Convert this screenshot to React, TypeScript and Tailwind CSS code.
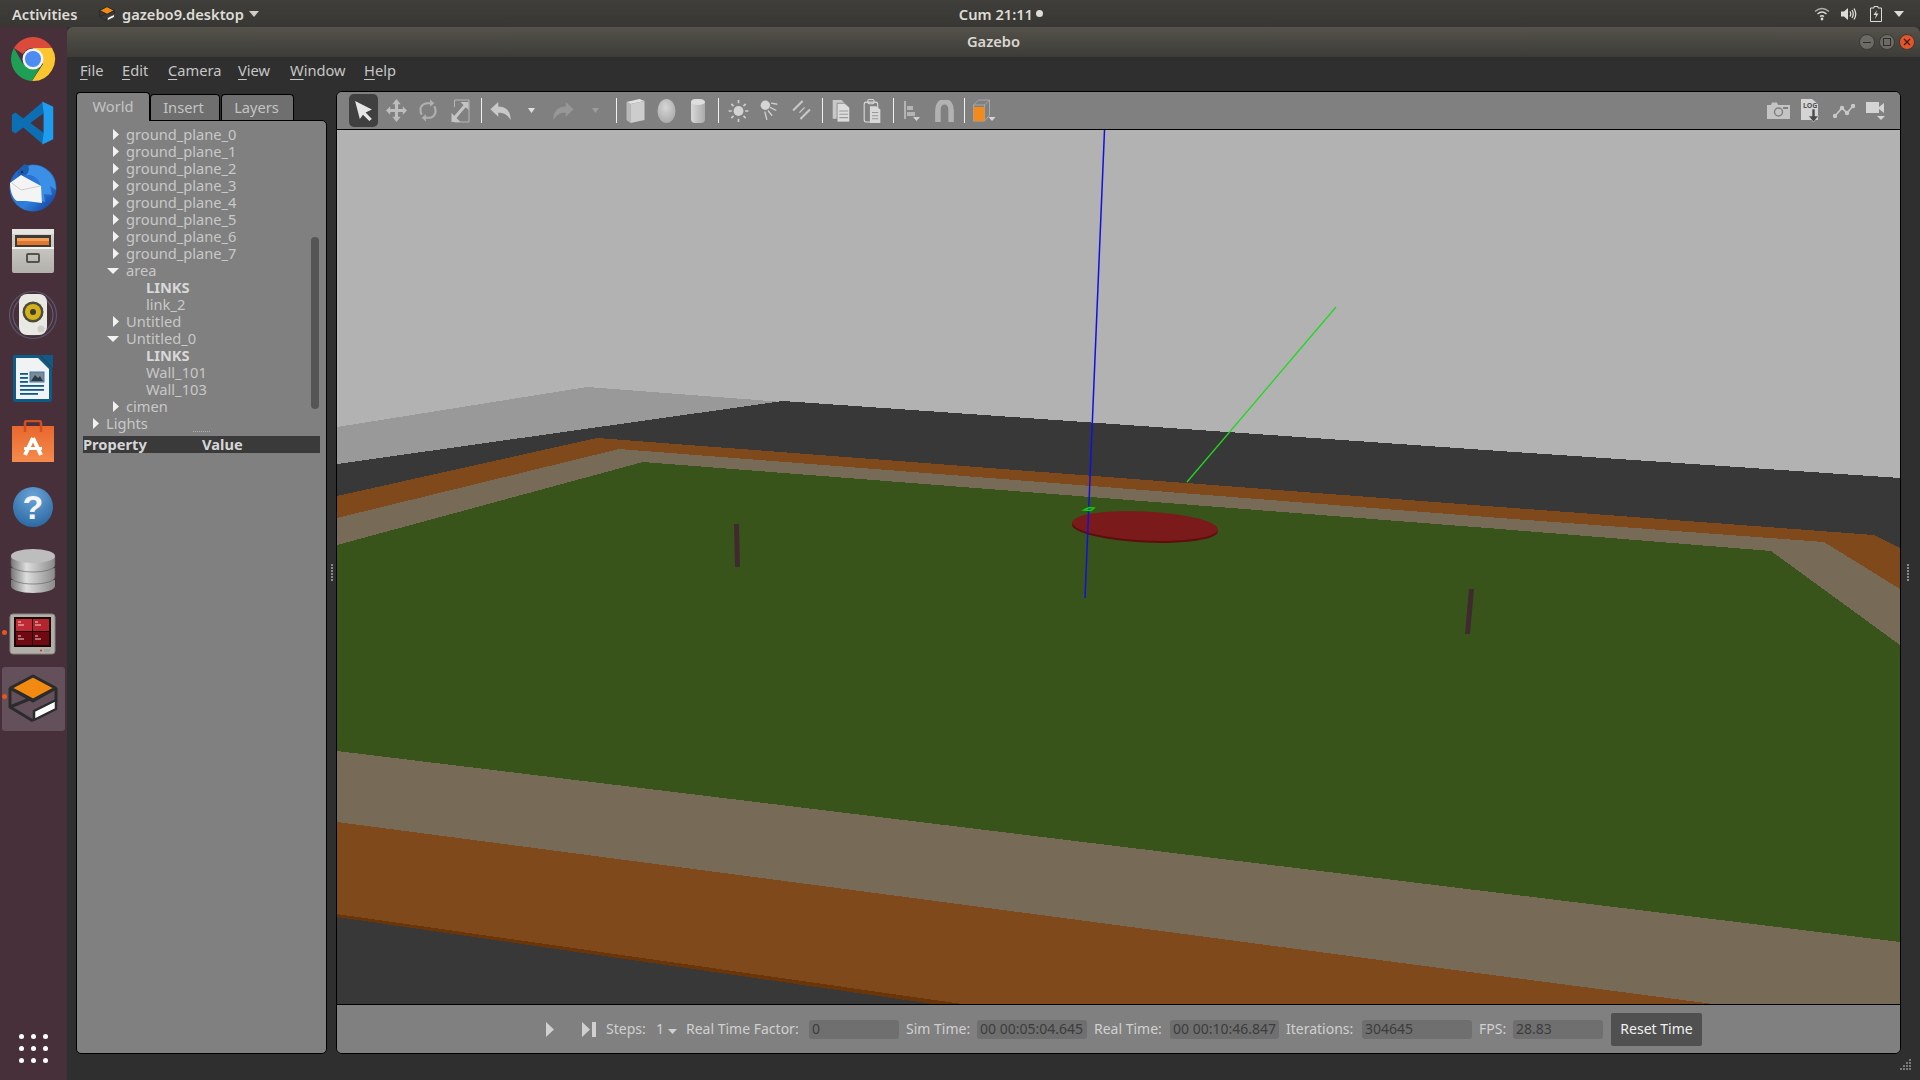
import React from "react";

const FONT = { fontFamily: '"Noto Sans", sans-serif' };

// launcher icons
const ChromeIcon = () => (
  <svg width="48" height="48" viewBox="0 0 48 48">
    <path d="M5 13 A22 22 0 0 1 43 13 L24 13 A11 11 0 0 0 14 19 Z" fill="#dc4a3c" />
    <path d="M43 13 A22 22 0 0 1 23 46 L34 29 L24 13 Z" fill="#fbc62f" />
    <path d="M5 13 A22 22 0 0 0 23 46 L33 29 L14 29 Z" fill="#1f9e55" />
    <circle cx="24" cy="24" r="10.5" fill="#f1f1f1" />
    <circle cx="24" cy="24" r="8" fill="#4c8bf0" />
  </svg>
);

const VsCodeIcon = () => (
  <svg width="44" height="44" viewBox="0 0 100 100">
    <path d="M72 2 L28 40 L10 26 L2 31 V69 L10 74 L28 60 L72 98 L74 72 L44 50 L74 28 Z" fill="#0d6fb3" />
    <path d="M71 1 L96 13 V87 L71 99 L74 72 V28 Z" fill="#1d9cf0" />
  </svg>
);

const ThunderbirdIcon = () => (
  <svg width="50" height="50" viewBox="0 0 50 50">
    <defs>
      <linearGradient id="tb" x1="0" y1="0" x2="1" y2="1">
        <stop offset="0" stopColor="#1a5fc4" />
        <stop offset="0.6" stopColor="#2f7fdc" />
        <stop offset="1" stopColor="#10318f" />
      </linearGradient>
    </defs>
    <circle cx="25" cy="26" r="23.5" fill="url(#tb)" />
    <path d="M25 3 C37 3 48 14 48 28 L42 24 L44 33 L36 32 L37 40 L30 38 L22 48 C28 40 38 30 30 18 C26 12 18 12 12 15 C15 8 20 3 25 3 Z" fill="#3b8fe6" />
    <path d="M17 2 C12 5 9 10 10 15 L18 13 C22 9 22 4 17 2 Z" fill="#1c5db0" />
    <path d="M2 21 L13 13 L33 24 L34 41 L18 39 L9 39 C4 36 2 28 2 21 Z" fill="#f4f4f4" />
    <path d="M4 21 L13 28 L32 24" fill="none" stroke="#c4c4c4" strokeWidth="0.8" />
    <circle cx="14" cy="10" r="1.2" fill="#0c2a55" />
  </svg>
);

const FilesIcon = () => (
  <svg width="48" height="48" viewBox="0 0 48 48">
    <defs>
      <linearGradient id="fl" x1="0" y1="0" x2="0" y2="1">
        <stop offset="0" stopColor="#d8d6d1" />
        <stop offset="1" stopColor="#b2b0aa" />
      </linearGradient>
    </defs>
    <rect x="3" y="2" width="42" height="44" rx="2" fill="url(#fl)" />
    <rect x="3" y="2" width="42" height="5" fill="#e6e5e1" />
    <rect x="6" y="8" width="36" height="12" fill="#3f3a34" />
    <rect x="8" y="11" width="32" height="6" fill="#f2a15c" />
    <rect x="8" y="14" width="32" height="4" fill="#e2762c" />
    <rect x="3" y="20" width="42" height="2" fill="#f2f2f0" />
    <rect x="18" y="27" width="12" height="8" rx="1" fill="none" stroke="#55524c" strokeWidth="2" />
  </svg>
);

const RhythmboxIcon = () => (
  <svg width="50" height="50" viewBox="0 0 50 50">
    <circle cx="25" cy="25" r="23.5" fill="none" stroke="#5b5670" strokeWidth="1.2" />
    <circle cx="25" cy="25" r="20" fill="none" stroke="#625c76" strokeWidth="1.2" />
    <rect x="11" y="4" width="28" height="41" rx="8" fill="#e9e9e4" />
    <circle cx="25" cy="22" r="10.5" fill="#4d4a3c" />
    <circle cx="25" cy="22" r="8" fill="#d2b11a" />
    <circle cx="25" cy="22" r="3" fill="#3c3a30" />
    <circle cx="33" cy="39" r="3.5" fill="#cfcfc9" />
  </svg>
);

const WriterIcon = () => (
  <svg width="44" height="50" viewBox="0 0 44 50">
    <path d="M3 1 H28 L41 14 V45 Q41 48 38 48 H5 Q2 48 2 45 V3 Q2 1 3 1 Z" fill="#0f5b87" />
    <path d="M5 4 H27 L38 15 V45 H5 Z" fill="#f0f2f4" />
    <path d="M29 1 H42 V14 Z" fill="#0f5b87" />
    <rect x="9" y="19" width="8" height="1.8" fill="#0f5b87" />
    <rect x="9" y="23" width="8" height="1.8" fill="#0f5b87" />
    <rect x="9" y="27" width="8" height="1.8" fill="#0f5b87" />
    <rect x="9" y="31" width="24" height="1.8" fill="#0f5b87" />
    <rect x="9" y="35" width="24" height="1.8" fill="#0f5b87" />
    <rect x="9" y="39" width="18" height="1.8" fill="#0f5b87" />
    <rect x="19" y="18" width="14" height="10" fill="#7a8a99" stroke="#3d7aa0" />
    <path d="M20 27 L24 21 L27 24 L29 22 L32 27 Z" fill="#2d3a44" />
  </svg>
);

const SoftwareIcon = () => (
  <svg width="46" height="46" viewBox="0 0 46 46">
    <defs>
      <linearGradient id="sw" x1="0" y1="0" x2="0" y2="1">
        <stop offset="0" stopColor="#e8682e" />
        <stop offset="1" stopColor="#f58a4c" />
      </linearGradient>
    </defs>
    <rect x="2" y="6" width="42" height="36" fill="url(#sw)" />
    <path d="M15 12 V3 Q15 1 17 1 H29 Q31 1 31 3 V12" fill="none" stroke="#cf4f22" strokeWidth="2.5" />
    <path d="M23 18 L15 35 M23 18 L31 35" stroke="#fff" strokeWidth="4" fill="none" />
    <rect x="14" y="27" width="18" height="3" fill="#fff" />
  </svg>
);

const HelpIcon = () => (
  <svg width="44" height="44" viewBox="0 0 44 44">
    <defs>
      <radialGradient id="hp" cx="0.5" cy="0.25" r="0.85">
        <stop offset="0" stopColor="#6ba4d8" />
        <stop offset="1" stopColor="#23629c" />
      </radialGradient>
    </defs>
    <circle cx="22" cy="22" r="20" fill="url(#hp)" />
    <text x="22" y="34" textAnchor="middle" fontSize="34" fontWeight="700" fill="#f5f5f5" fontFamily="Liberation Sans, sans-serif">?</text>
  </svg>
);

const DbIcon = () => (
  <svg width="48" height="48" viewBox="0 0 48 48">
    <defs>
      <linearGradient id="db" x1="0" y1="0" x2="1" y2="0">
        <stop offset="0" stopColor="#777777" />
        <stop offset="0.35" stopColor="#dddddd" />
        <stop offset="1" stopColor="#8a8a8a" />
      </linearGradient>
    </defs>
    <path d="M2 33 V39 C2 43 12 46 24 46 C36 46 46 43 46 39 V33 Z" fill="url(#db)" />
    <path d="M2 21 V30 C2 34 12 37 24 37 C36 37 46 34 46 30 V21 Z" fill="url(#db)" stroke="#5a5a5a" strokeWidth="0.6" />
    <path d="M2 9 V18 C2 22 12 25 24 25 C36 25 46 22 46 18 V9 Z" fill="url(#db)" stroke="#5a5a5a" strokeWidth="0.6" />
    <ellipse cx="24" cy="9" rx="22" ry="7" fill="#bdbdbd" />
  </svg>
);

const TermGridIcon = () => (
  <svg width="48" height="44" viewBox="0 0 48 44">
    <rect x="1" y="1" width="45" height="40" rx="3" fill="#b0afa8" stroke="#85847f" />
    <rect x="5" y="4" width="37" height="30" fill="#1f0608" />
    <rect x="7" y="6" width="16" height="12" fill="#c02a34" />
    <rect x="24" y="6" width="16" height="12" fill="#b3242e" />
    <rect x="7" y="19" width="16" height="13" fill="#6f0a12" />
    <rect x="24" y="19" width="16" height="13" fill="#6f0a12" />
    <path d="M9 9 h3 M9 12 h6 M26 9 h3 M26 12 h6 M9 23 h3 M9 26 h6 M26 23 h3 M26 26 h6" stroke="#f3d0d0" strokeWidth="1" />
    <circle cx="32" cy="37.5" r="1" fill="#d8262c" />
    <rect x="35" y="36" width="6" height="3" fill="#a3a29c" />
  </svg>
);

const GazeboIcon = ({ size = 50 }: { size?: number }) => (
  <svg width={size} height={size} viewBox="0 0 50 50">
    <path d="M2 14 V33 L25 47 M2 14 L25 27 L48 14 M2 33 L24 24" fill="none" stroke="#2b2b2b" strokeWidth="3" strokeLinejoin="round" />
    <path d="M2.5 14 L25 2 L47.5 14 L25 26 Z" fill="#f28a12" stroke="#2b2b2b" strokeWidth="3" strokeLinejoin="round" />
    <path d="M48 14 V28" stroke="#2b2b2b" strokeWidth="3" />
    <path d="M26 37 L48 26 L48 35 L26 46 Z" fill="#fff" stroke="#2b2b2b" strokeWidth="2.5" strokeLinejoin="round" />
  </svg>
);

const DockItem = ({ children, dot, active }: { children: React.ReactNode; dot?: boolean; active?: boolean }) => (
  <div className="relative flex h-[64px] w-[67px] items-center justify-center pr-[1px]">
    {active && <div className="absolute inset-x-[2px] inset-y-0 rounded-[3px] bg-[#64505a]" />}
    {dot && <div className="absolute left-[2px] top-[27px] h-[5px] w-[5px] rounded-full bg-[#e9541f]" />}
    <div className="relative flex">{children}</div>
  </div>
);

const Dock = () => (
  <div className="flex w-[67px] flex-none flex-col bg-[#47303a]">
    <DockItem><ChromeIcon /></DockItem>
    <DockItem><VsCodeIcon /></DockItem>
    <DockItem><ThunderbirdIcon /></DockItem>
    <DockItem><FilesIcon /></DockItem>
    <DockItem><RhythmboxIcon /></DockItem>
    <DockItem><WriterIcon /></DockItem>
    <DockItem><SoftwareIcon /></DockItem>
    <DockItem><HelpIcon /></DockItem>
    <DockItem><DbIcon /></DockItem>
    <DockItem dot><TermGridIcon /></DockItem>
    <DockItem dot active><GazeboIcon /></DockItem>
    <div className="mt-auto flex h-[64px] items-center justify-center pr-[1px]">
      <div className="grid grid-cols-3 gap-[7px]">
        {Array.from({ length: 9 }).map((_, i) => (
          <div key={i} className="h-[5px] w-[5px] rounded-full bg-white" />
        ))}
      </div>
    </div>
  </div>
);

const TopBar = () => (
  <div className="flex h-[27px] flex-none items-center bg-gradient-to-b from-[#403e3a] to-[#383733] text-[14.67px] font-semibold text-[#dedcd6]">
    <span className="ml-[12px] w-[87px]">Activities</span>
    <span className="mr-[7px] flex"><GazeboIcon size={16} /></span>
    <span>gazebo9.desktop</span>
    <svg className="ml-[5px]" width="10" height="6" viewBox="0 0 10 6"><path d="M0 0 H10 L5 6 Z" fill="#cfcdc7" /></svg>
    <span className="ml-[700px]">Cum 21:11</span>
    <span className="ml-[3px] h-[7px] w-[7px] rounded-full bg-[#dedcd6]" />
    <div className="ml-auto flex items-center">
      <svg width="16" height="14" viewBox="0 0 16 14" fill="none" stroke="#dedcd6" strokeWidth="1.4">
        <path d="M1 4.5 Q8 -1.5 15 4.5" opacity="0.7" />
        <path d="M3.5 7 Q8 3 12.5 7" />
        <path d="M6 9.5 Q8 7.8 10 9.5" />
        <circle cx="8" cy="12" r="1.4" fill="#dedcd6" stroke="none" />
      </svg>
      <svg className="ml-[11px]" width="16" height="14" viewBox="0 0 16 14" fill="none" stroke="#dedcd6" strokeWidth="1.3">
        <path d="M0 4.5 H3 L7 1 V13 L3 9.5 H0 Z" fill="#dedcd6" stroke="none" />
        <path d="M9 4.5 Q10.5 7 9 9.5 M11 3 Q13.5 7 11 11 M13 1.5 Q16.5 7 13 12.5" />
      </svg>
      <svg className="ml-[13px]" width="12" height="16" viewBox="0 0 12 16" fill="none">
        <path d="M4 0.5 H8 V2 H11.5 V15.5 H0.5 V2 H4 Z" stroke="#dedcd6" />
        <path d="M7 4 L3.5 9 H6 L5 13 L8.5 7.5 H6 Z" fill="#dedcd6" />
      </svg>
      <svg className="ml-[12px] mr-[16px]" width="10" height="6" viewBox="0 0 10 6"><path d="M0 0 H10 L5 6 Z" fill="#dedcd6" /></svg>
    </div>
  </div>
);

const WinBtn = ({ className, children }: { className: string; children: React.ReactNode }) => (
  <div className={"flex h-[16px] w-[16px] items-center justify-center rounded-full border border-[#3a3936] " + className}>
    {children}
  </div>
);

const TitleBar = () => (
  <div className="relative flex h-[30px] flex-none items-center justify-center rounded-t-[6px] bg-gradient-to-b from-[#55524b] to-[#3d3c38] pb-[2px] text-[14.67px] font-semibold text-[#d9d7d1]">
    <span>Gazebo</span>
    <div className="absolute right-[5px] top-[7px] flex gap-[4px]">
      <WinBtn className="bg-[#6b6a65]"><div className="h-[1px] w-[8px] bg-[#2f2e2b]" /></WinBtn>
      <WinBtn className="bg-[#6b6a65]"><div className="h-[8px] w-[8px] border border-[#2f2e2b]" /></WinBtn>
      <WinBtn className="bg-[#e5552a]">
        <svg width="8" height="8" viewBox="0 0 8 8"><path d="M1 1 L7 7 M7 1 L1 7" stroke="#3a1a10" strokeWidth="1.2" /></svg>
      </WinBtn>
    </div>
  </div>
);

const MenuItem = ({ first, rest, className }: { first: string; rest: string; className: string }) => (
  <span className={className}><span className="underline underline-offset-[3px]">{first}</span>{rest}</span>
);

const MenuBar = () => (
  <div className="flex h-[34px] flex-none items-center bg-[#2f2f2f] pb-[9px] pl-[13px] text-[14.67px] text-[#c6c6c6]">
    <MenuItem first="F" rest="ile" className="w-[42px]" />
    <MenuItem first="E" rest="dit" className="w-[46px]" />
    <MenuItem first="C" rest="amera" className="w-[70px]" />
    <MenuItem first="V" rest="iew" className="w-[52px]" />
    <MenuItem first="W" rest="indow" className="w-[74px]" />
    <MenuItem first="H" rest="elp" className="w-[40px]" />
  </div>
);

const treeRows = [
  { label: "ground_plane_0", pl: "pl-[29px]", arrow: "right" },
  { label: "ground_plane_1", pl: "pl-[29px]", arrow: "right" },
  { label: "ground_plane_2", pl: "pl-[29px]", arrow: "right" },
  { label: "ground_plane_3", pl: "pl-[29px]", arrow: "right" },
  { label: "ground_plane_4", pl: "pl-[29px]", arrow: "right" },
  { label: "ground_plane_5", pl: "pl-[29px]", arrow: "right" },
  { label: "ground_plane_6", pl: "pl-[29px]", arrow: "right" },
  { label: "ground_plane_7", pl: "pl-[29px]", arrow: "right" },
  { label: "area", pl: "pl-[29px]", arrow: "down" },
  { label: "LINKS", pl: "pl-[69px]", bold: true },
  { label: "link_2", pl: "pl-[69px]" },
  { label: "Untitled", pl: "pl-[29px]", arrow: "right" },
  { label: "Untitled_0", pl: "pl-[29px]", arrow: "down" },
  { label: "LINKS", pl: "pl-[69px]", bold: true },
  { label: "Wall_101", pl: "pl-[69px]" },
  { label: "Wall_103", pl: "pl-[69px]" },
  { label: "cimen", pl: "pl-[29px]", arrow: "right" },
  { label: "Lights", pl: "pl-[9px]", arrow: "right" },
];

const TreeRow = ({ label, pl, arrow, bold }: { label: string; pl: string; arrow?: string; bold?: boolean }) => (
  <div className={"flex h-[17px] items-center " + pl}>
    {arrow && (
      <div className="flex w-[20px] flex-none justify-end pr-[7px]">
        {arrow === "right" ? (
          <svg width="6" height="11" viewBox="0 0 6 11"><path d="M0 0 L6 5.5 L0 11 Z" fill="#f2f2f2" /></svg>
        ) : (
          <svg width="12" height="6" viewBox="0 0 12 6"><path d="M0 0 H12 L6 6 Z" fill="#f2f2f2" /></svg>
        )}
      </div>
    )}
    <span className={bold ? "font-bold text-[#d8d8d8]" : "text-[#c8c8c8]"}>{label}</span>
  </div>
);

const LeftPanel = () => (
  <div className="flex w-[251px] flex-none flex-col">
    <div className="flex h-[29px] flex-none items-end text-[14.67px] text-[#c4c4c4]">
      <div className="z-10 -mb-[1px] flex h-[29px] w-[74px] items-center justify-center rounded-t-[4px] border border-b-0 border-black bg-[#808080] pb-[2px]">World</div>
      <div className="flex h-[26px] w-[70px] items-center justify-center rounded-t-[4px] border border-b-0 border-black bg-[#6f6f6f] pb-[1px] pr-[3px]">Insert</div>
      <div className="ml-[1px] flex h-[26px] w-[73px] items-center justify-center rounded-t-[4px] border border-b-0 border-black bg-[#6f6f6f] pb-[1px] pr-[2px]">Layers</div>
    </div>
    <div className="flex flex-1 flex-col rounded-b-[5px] rounded-tr-[5px] border border-black bg-[#808080] text-[14.67px]">
      <div className="flex h-[306px] flex-none pt-[5px] leading-none">
        <div className="flex-1">
          {treeRows.map((r, i) => <TreeRow key={i} {...r} />)}
        </div>
        <div className="mr-[7px] mt-[111px] h-[172px] w-[8px] rounded-[4px] bg-[#555555]" />
      </div>
      <div className="flex h-[9px] flex-none items-center justify-center pr-[1px]">
        <div className="h-[1px] w-[17px] border-t border-dotted border-[#b0b0b0]" />
      </div>
      <div className="mx-[6px] flex h-[17px] flex-none items-center bg-[#3a3a3a] font-bold leading-none text-[#d6d6d6]">
        <span className="w-[119px]">Property</span>
        <span>Value</span>
      </div>
    </div>
  </div>
);

const Sep = ({ className }: { className: string }) => (
  <div className={"flex justify-center " + className}><div className="h-[25px] w-[1px] bg-[#f0f0f0]" /></div>
);

const Slot = ({ className, children }: { className: string; children: React.ReactNode }) => (
  <div className={"flex h-[32px] flex-none items-center justify-center " + className}>{children}</div>
);

const Drop = ({ fill = "#e0e0e0" }: { fill?: string }) => (
  <svg width="7" height="5" viewBox="0 0 7 5"><path d="M0 0 H7 L3.5 5 Z" fill={fill} /></svg>
);

const Toolbar = () => (
  <div className="flex h-[38px] flex-none items-center rounded-t-[5px] border-b border-black bg-[#808080] pl-[12px]">
    <Slot className="w-[31px] justify-start">
      <div className="flex h-[33px] w-[29px] items-center justify-center rounded-[5px] bg-[#404040]">
        <svg width="21" height="21" viewBox="0 0 18 20"><path d="M1 1 L17 9 L11 12 L17 18 L14.5 20 L8.5 14 L5.5 18 Z" fill="#e6e6e6" /></svg>
      </div>
    </Slot>
    <Slot className="w-[32px]">
      <svg width="23" height="23" viewBox="0 0 20 22"><path d="M10 0 L14 5 H11.5 V9.5 H16 V7 L20 11 L16 15 V12.5 H11.5 V17 H14 L10 22 L6 17 H8.5 V12.5 H4 V15 L0 11 L4 7 V9.5 H8.5 V5 H6 Z" fill="#bdbdbd" /></svg>
    </Slot>
    <Slot className="w-[32px]">
      <svg width="20" height="23" viewBox="0 0 18 22" fill="none" stroke="#b0b0b0" strokeWidth="2">
        <path d="M3 15 C0 9 3 4 9 4 H12" /><path d="M15 7 C18 13 15 18 9 18 H6" />
        <path d="M11 0.5 L15 4 L11 7.5 Z" fill="#b0b0b0" stroke="none" /><path d="M7 14.5 L3 18 L7 21.5 Z" fill="#b0b0b0" stroke="none" />
      </svg>
    </Slot>
    <Slot className="w-[32px]">
      <svg width="23" height="24" viewBox="0 0 18 24" fill="none">
        <path d="M3 8 V1 H17.5 V23 H3 V20" stroke="#c4c4c4" strokeWidth="0.8" />
        <path d="M3 19 L15 5" stroke="#c4c4c4" strokeWidth="3" />
        <path d="M9 3 H17 V11 Z M0 14 V23 H9 Z" fill="#c4c4c4" />
      </svg>
    </Slot>
    <Sep className="w-[10px]" />
    <Slot className="w-[28px]">
      <svg width="23" height="18" viewBox="0 0 18 16"><path d="M0 6.5 L7 0 V4 C14 4 18 8 18 16 C15 11 12 9.5 7 9.5 V13 Z" fill="#c8c8c8" /></svg>
    </Slot>
    <Slot className="w-[34px]"><Drop /></Slot>
    <Slot className="w-[30px]">
      <svg width="23" height="18" viewBox="0 0 18 16"><path d="M18 6.5 L11 0 V4 C4 4 0 8 0 16 C3 11 6 9.5 11 9.5 V13 Z" fill="#979797" /></svg>
    </Slot>
    <Slot className="w-[34px]"><Drop fill="#9c9c9c" /></Slot>
    <Sep className="w-[8px]" />
    <Slot className="w-[30px]">
      <svg width="23" height="24" viewBox="0 0 18 24">
        <path d="M0 3 L13 0 L18 2 L4 5 Z" fill="#e2e2e2" /><path d="M0 3 L4 5 V24 L0 21 Z" fill="#b8b8b8" /><path d="M4 5 L18 2 V21 L4 24 Z" fill="#cdcdcd" />
      </svg>
    </Slot>
    <Slot className="w-[32px]">
      <svg width="23" height="24" viewBox="0 0 18 24">
        <defs><radialGradient id="sph" cx="0.45" cy="0.35" r="0.7"><stop offset="0" stopColor="#d6d6d6" /><stop offset="1" stopColor="#a8a8a8" /></radialGradient></defs>
        <ellipse cx="9" cy="12" rx="9" ry="12" fill="url(#sph)" />
      </svg>
    </Slot>
    <Slot className="w-[32px]">
      <svg width="18" height="24" viewBox="0 0 14 24">
        <defs><linearGradient id="cyl" x1="0" y1="0" x2="1" y2="0"><stop offset="0" stopColor="#d8d8d8" /><stop offset="1" stopColor="#ababab" /></linearGradient></defs>
        <rect width="14" height="24" rx="4" fill="url(#cyl)" /><ellipse cx="7" cy="3" rx="7" ry="3" fill="#dedede" />
      </svg>
    </Slot>
    <Sep className="w-[9px]" />
    <Slot className="w-[30px]">
      <svg width="21" height="22" viewBox="0 0 18 20" stroke="#cfcfcf" strokeWidth="1.5">
        <circle cx="9" cy="10" r="4.5" fill="#d4d4d4" stroke="none" />
        <path d="M9 0 V3 M9 17 V20 M0 10 H3 M15 10 H18 M2.5 3.5 L4.5 5.5 M13.5 14.5 L15.5 16.5 M15.5 3.5 L13.5 5.5 M4.5 14.5 L2.5 16.5" />
      </svg>
    </Slot>
    <Slot className="w-[32px]">
      <svg width="22" height="23" viewBox="0 0 18 22" stroke="#cfcfcf" strokeWidth="1.3" fill="none">
        <circle cx="5.5" cy="6" r="4.5" fill="#d4d4d4" stroke="none" />
        <path d="M11 4 L17 5 M10 8 L16 11 M8 11 L12 16 M5 12 L7 20" />
      </svg>
    </Slot>
    <Slot className="w-[32px]">
      <svg width="23" height="21" viewBox="0 0 18 20" stroke="#c8c8c8" strokeWidth="2" fill="none">
        <path d="M10 1 L1 10 M17 9 L8 18" /><path d="M12 7 L7 12" strokeWidth="1.2" />
      </svg>
    </Slot>
    <Sep className="w-[10px]" />
    <Slot className="w-[28px]">
      <svg width="19" height="22" viewBox="0 0 16 20">
        <path d="M0 0 H8 L11 3 V17 H0 Z" fill="#c8c8c8" /><path d="M4 3 H11 L15.5 7 V20 H4 Z" fill="#dcdcdc" stroke="#808080" strokeWidth="0.7" />
        <path d="M6 10 H14 M6 13 H14 M6 16 H14" stroke="#9a9a9a" />
      </svg>
    </Slot>
    <Slot className="w-[34px]">
      <svg width="20" height="24" viewBox="0 0 16 23">
        <rect x="0.5" y="3" width="13" height="19" rx="2" fill="none" stroke="#dcdcdc" />
        <rect x="4" y="0.5" width="6" height="4" rx="1.5" fill="none" stroke="#dcdcdc" />
        <path d="M6 7 H12 L16 10 V23 H6 Z" fill="#d8d8d8" /><path d="M8 13 H14 M8 16 H14 M8 19 H14" stroke="#989898" />
      </svg>
    </Slot>
    <Sep className="w-[8px]" />
    <Slot className="w-[30px]">
      <svg width="20" height="20" viewBox="0 0 16 20">
        <path d="M0 0 H2 V18 H0 Z M3 5 H9 V9 H3 Z M3 11 H11 V15 H3 Z" fill="#b4b4b4" /><path d="M9 16 H16 L12.5 20 Z" fill="#d0d0d0" />
      </svg>
    </Slot>
    <Slot className="w-[34px]">
      <svg width="23" height="22" viewBox="0 0 18 20"><path d="M3 20 V9 C3 -1 15 -1 15 9 V20" fill="none" stroke="#b2b2b2" strokeWidth="5" /></svg>
    </Slot>
    <Sep className="w-[6px]" />
    <Slot className="w-[34px]">
      <svg width="29" height="24" viewBox="0 0 24 24" fill="none">
        <path d="M1 6 L6 1 H17 V16 L12 22 H1 Z M1 6 H12 V22 M12 6 L17 1" stroke="#b8b8b8" strokeWidth="0.7" />
        <rect x="1" y="8" width="11" height="14" fill="#f28a1c" /><path d="M16 18 H23 L19.5 22 Z" fill="#d6d6d6" />
      </svg>
    </Slot>
    <div className="ml-auto flex items-center pr-[9px]">
      <Slot className="w-[32px]">
        <svg width="23" height="17" viewBox="0 0 23 17">
          <path d="M0 3 H4 L5 0.5 H10 L11 3 H23 V17 H0 Z" fill="#c4c4c4" /><circle cx="11.5" cy="10" r="4" fill="none" stroke="#808080" strokeWidth="1.5" /><rect x="16" y="5" width="5" height="2" fill="#808080" />
        </svg>
      </Slot>
      <Slot className="w-[33px]">
        <svg width="20" height="24" viewBox="0 0 20 24">
          <path d="M0 0 H11 L17 5 V21 H0 Z" fill="#d4d4d4" />
          <text x="2" y="9" fontSize="7" fontWeight="700" fill="#555" fontFamily="Noto Sans, sans-serif">LOG</text>
          <path d="M11 10 H14 V17 H17.5 L12.5 23 L7.5 17 H11 Z" fill="#4a4a4a" stroke="#d4d4d4" strokeWidth="0.6" />
        </svg>
      </Slot>
      <Slot className="w-[33px]">
        <svg width="22" height="14" viewBox="0 0 22 14" fill="#c8c8c8" stroke="#c8c8c8" strokeWidth="1.6">
          <path d="M2 12 L9 4 L14 9 L20 2" fill="none" /><circle cx="2" cy="12" r="1.4" /><circle cx="9" cy="4" r="1.4" /><circle cx="14" cy="9" r="1.4" /><circle cx="20" cy="2" r="1.4" />
        </svg>
      </Slot>
      <Slot className="w-[31px]">
        <svg width="20" height="20" viewBox="0 0 20 20">
          <rect x="0" y="1" width="13" height="11" fill="#d4d4d4" /><path d="M13 6 L18 2 V12 L13 8 Z" fill="#d4d4d4" /><path d="M11 15 H19 L15 19 Z" fill="#d4d4d4" />
        </svg>
      </Slot>
    </div>
  </div>
);

// the 3D view, traced from the render
const Scene = () => (
  <svg className="block h-[874px] w-full flex-none" viewBox="337 130 1563 874" shapeRendering="crispEdges">
    <rect x="337" y="130" width="1563" height="874" fill="#b2b2b2" />
    <polygon points="337,427 587,387 783,402 337,464" fill="#999999" />
    <polygon points="337,464 783,401 1500,451 1900,478 1900,1004 337,1004" fill="#383838" />
    <polygon points="337,914 962,1004 933,1004 337,917" fill="#6a3508" />
    <polygon points="337,496 597,438 1500,507 1874,535 1900,548 1900,1004 962,1004 337,914" fill="#80491b" />
    <polygon points="337,518 619,449 1500,518 1824,542 1900,589 1900,1004 1713,1004 1500,976 830,887 337,822" fill="#776a56" />
    <polygon points="337,545 643,462 1500,529 1771,551 1900,645 1900,942 1500,893 830,811 337,751" fill="#38541a" />
    <g shapeRendering="auto">
      <g transform="rotate(2.8 1145 526)">
        <ellipse cx="1145" cy="528" rx="73" ry="14.5" fill="#5c0e0e" />
        <ellipse cx="1145" cy="526" rx="73" ry="14.5" fill="#7b1a1a" />
      </g>
      <line x1="1104.5" y1="130" x2="1085" y2="598" stroke="#1010e0" strokeWidth="1.5" />
      <line x1="1187" y1="482" x2="1336" y2="307" stroke="#1fd81f" strokeWidth="1.3" />
      <path d="M1084 510 L1089 507.5 L1094 508 L1091 510.5 Z" fill="none" stroke="#12cc12" strokeWidth="1.5" />
      <polygon points="734,524 739,524 740,567 735,567" fill="#3f2a30" />
      <polygon points="1469,589 1474,589 1470,634 1465,634" fill="#3f2a30" />
    </g>
  </svg>
);

const Field = ({ value, className }: { value: string; className: string }) => (
  <div className={"flex h-[19px] flex-none items-center whitespace-nowrap rounded-[3px] bg-[#6f6f6f] pl-[3px] text-[#3c3c3c] " + className}>{value}</div>
);

const Label = ({ text, className }: { text: string; className: string }) => (
  <span className={"flex-none whitespace-nowrap text-[#d0d0d0] " + className}>{text}</span>
);

const StatusBar = () => (
  <div className="flex flex-1 items-center rounded-b-[5px] border-t border-black bg-[#808080] pl-[209px] text-[14px] leading-none">
    <svg width="8" height="15" viewBox="0 0 8 15" className="mr-[28px] flex-none"><path d="M0 0 L8 7.5 L0 15 Z" fill="#d0d0d0" /></svg>
    <svg width="14" height="15" viewBox="0 0 14 15" className="mr-[10px] flex-none"><path d="M0 0 L8 7.5 L0 15 Z M10 0 H14 V15 H10 Z" fill="#d0d0d0" /></svg>
    <Label text="Steps:" className="w-[50px]" />
    <Label text="1" className="w-[10px]" />
    <svg width="9" height="5" viewBox="0 0 9 5" className="ml-[2px] mt-[4px] mr-[9px] flex-none"><path d="M0 0 H9 L4.5 5 Z" fill="#d0d0d0" /></svg>
    <Label text="Real Time Factor:" className="w-[123px]" />
    <Field value="0" className="mr-[7px] w-[90px]" />
    <Label text="Sim Time:" className="w-[71px]" />
    <Field value="00 00:05:04.645" className="mr-[7px] w-[110px]" />
    <Label text="Real Time:" className="w-[76px]" />
    <Field value="00 00:10:46.847" className="mr-[7px] w-[109px]" />
    <Label text="Iterations:" className="w-[76px]" />
    <Field value="304645" className="mr-[7px] w-[110px]" />
    <Label text="FPS:" className="w-[34px]" />
    <Field value="28.83" className="mr-[8px] w-[90px]" />
    <div className="flex h-[33px] w-[91px] flex-none items-center justify-center rounded-[2px] bg-[#505050] text-[#f0f0f0]">Reset Time</div>
  </div>
);

const Viewport = () => (
  <div className="flex w-[1565px] flex-none flex-col rounded-[6px] border border-black bg-[#808080]">
    <Toolbar />
    <Scene />
    <StatusBar />
  </div>
);

const Grip = () => (
  <div className="flex flex-col gap-[1px]">
    {Array.from({ length: 6 }).map((_, i) => <div key={i} className="h-[2px] w-[2px] bg-[#8a8a8a]" />)}
  </div>
);

export default function App() {
  return (
    <div className="flex h-[1080px] w-[1920px] flex-col overflow-hidden bg-[#2f2f2f]" style={FONT}>
      <TopBar />
      <div className="flex min-h-0 flex-1">
        <Dock />
        <div className="relative flex min-w-0 flex-1 flex-col">
          <TitleBar />
          <MenuBar />
          <div className="flex h-[963px] flex-none pl-[9px]">
            <LeftPanel />
            <div className="flex w-[9px] flex-none items-center justify-center"><Grip /></div>
            <Viewport />
            <div className="flex w-[13px] flex-none items-center justify-center"><Grip /></div>
          </div>
          {/* size grip, bottom right corner */}
          <div className="absolute bottom-[10px] right-[9px] grid grid-cols-4 gap-[1px]">
            {[0,0,0,1, 0,0,1,1, 0,1,1,1, 1,1,1,1].map((on, i) => (
              <div key={i} className={on ? "h-[2px] w-[2px] bg-[#7a7a7a]" : "h-[2px] w-[2px]"} />
            ))}
          </div>
        </div>
      </div>
    </div>
  );
}
